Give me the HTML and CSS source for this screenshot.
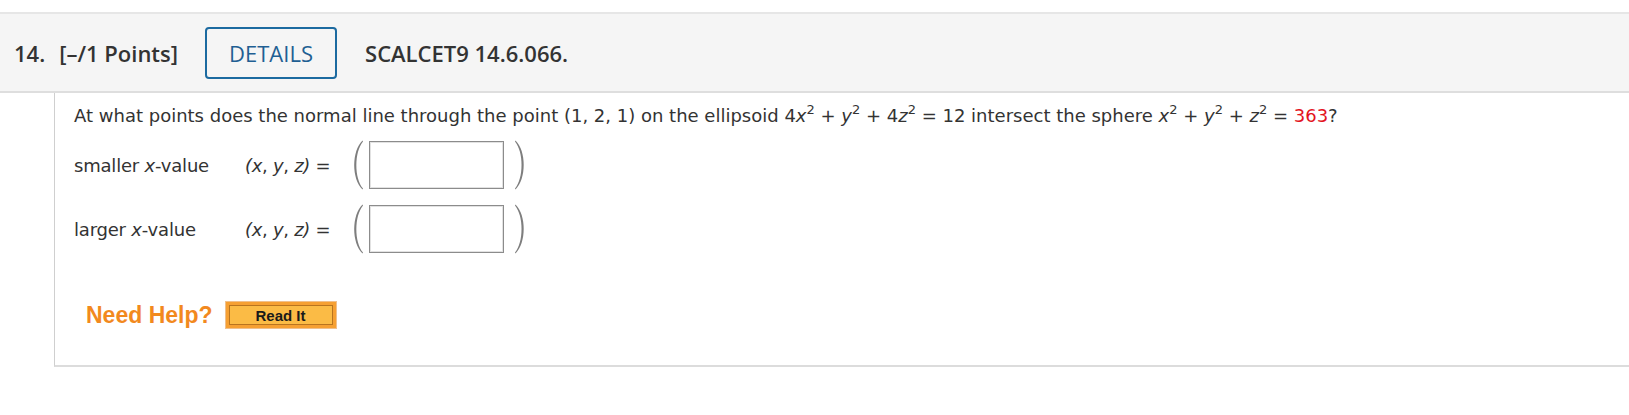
FILE: index.html
```html
<!DOCTYPE html>
<html lang="en">
<head>
<meta charset="utf-8">
<title>Question 14</title>
<link rel="stylesheet" href="styles.css">
</head>
<body>
<div class="question">
  <div class="q-head">
    <span class="q-num">14.</span>
    <span class="q-pts">[–/1 Points]</span>
    <button class="details-btn" type="button">DETAILS</button>
    <span class="q-code">SCALCET9 14.6.066.</span>
  </div>
  <div class="q-body">
    <p class="prompt">At what points does the normal line through the point (1, 2, 1) on the ellipsoid 4<i>x</i><sup>2</sup> + <i>y</i><sup>2</sup> + 4<i>z</i><sup>2</sup> = 12 intersect the sphere <i>x</i><sup>2</sup> + <i>y</i><sup>2</sup> + <i>z</i><sup>2</sup> = <span class="red">363</span>?</p>
    <div class="ans-row">
      <span class="ans-label">smaller <i>x</i>-value</span>
      <span class="ans-eq"><i>(x</i>, <i>y</i>, <i>z)</i> =</span>
      <svg class="paren" width="14" height="52" viewBox="0 0 14 52"><path d="M12.5 1.5 C1.5 12 1.5 40 12.5 50.5 L13 49.6 C4.2 39 4.2 13 13 2.4 Z" fill="#7e7e7e"/></svg>
      <span class="ans-box"></span>
      <svg class="paren paren-r" width="14" height="52" viewBox="0 0 14 52"><path d="M1.5 1.5 C12.5 12 12.5 40 1.5 50.5 L1 49.6 C9.8 39 9.8 13 1 2.4 Z" fill="#7e7e7e"/></svg>
    </div>
    <div class="ans-row">
      <span class="ans-label">larger <i>x</i>-value</span>
      <span class="ans-eq"><i>(x</i>, <i>y</i>, <i>z)</i> =</span>
      <svg class="paren" width="14" height="52" viewBox="0 0 14 52"><path d="M12.5 1.5 C1.5 12 1.5 40 12.5 50.5 L13 49.6 C4.2 39 4.2 13 13 2.4 Z" fill="#7e7e7e"/></svg>
      <span class="ans-box"></span>
      <svg class="paren paren-r" width="14" height="52" viewBox="0 0 14 52"><path d="M1.5 1.5 C12.5 12 12.5 40 1.5 50.5 L1 49.6 C9.8 39 9.8 13 1 2.4 Z" fill="#7e7e7e"/></svg>
    </div>
    <div class="help">
      <span class="help-text">Need Help?</span>
      <button class="read-btn" type="button"><span class="read-inner">Read It</span></button>
    </div>
  </div>
</div>
</body>
</html>
```
FILE: styles.css
```css
html, body {
  margin: 0;
  padding: 0;
  background: #ffffff;
}

.question {
  margin-top: 12px;
}

.q-head {
  display: flex;
  align-items: center;
  height: 77px;
  padding-left: 14px;
  background: #f5f5f5;
  border-top: 2px solid #e6e6e6;
  border-bottom: 2px solid #dedede;
  font-family: "Open Sans", "Noto Sans", sans-serif;
  font-size: 22px;
  color: #333333;
}

.q-num {
  font-weight: 600;
}

.q-pts {
  font-weight: 600;
  margin-left: 14px;
}

.details-btn {
  margin-left: 27px;
  width: 132px;
  height: 52px;
  border: 2px solid #1c6aa0;
  border-radius: 4px;
  background: transparent;
  font-family: "Open Sans", "Noto Sans", sans-serif;
  font-size: 22px;
  color: #1f5f93;
  padding: 0;
}

.q-code {
  font-weight: 600;
  margin-left: 28px;
}

.q-body {
  margin-left: 54px;
  border-left: 1px solid #cfcfcf;
  border-bottom: 2px solid #dcdcdc;
  padding: 10px 0 36px 19px;
  font-family: "DejaVu Sans", Verdana, sans-serif;
  font-size: 18px;
  color: #333333;
}

.prompt {
  margin: 0;
  line-height: 26px;
}

sup {
  font-size: 13px;
  line-height: 0;
  vertical-align: 8px;
}

.red {
  color: #e3141e;
}

.ans-row {
  display: flex;
  align-items: center;
  height: 52px;
  margin-top: 10px;
}

.ans-row + .ans-row {
  margin-top: 12px;
}

.ans-label {
  width: 171px;
  flex: none;
  letter-spacing: -0.2px;
}

.ans-eq {
  flex: none;
  width: 105px;
  letter-spacing: -0.3px;
}

.paren {
  flex: none;
  display: block;
}

.ans-box {
  flex: none;
  width: 133px;
  height: 46px;
  margin-left: 5px;
  border: 1px solid #8c8c8c;
  box-shadow: inset 0 0 0 1px #e2e2e2;
  background: #ffffff;
}

.paren-r {
  margin-left: 10px;
}

.help {
  display: flex;
  align-items: center;
  margin-top: 46px;
  margin-left: 12px;
}

.help-text {
  font-family: "Liberation Sans", Arial, sans-serif;
  font-weight: bold;
  font-size: 23px;
  color: #f2891e;
}

.read-btn {
  margin-left: 12px;
  width: 112px;
  height: 28px;
  padding: 3px;
  border: 1px solid #f0c08c;
  background: #f6a032;
  display: flex;
}

.read-inner {
  flex: 1;
  display: flex;
  align-items: center;
  justify-content: center;
  border: 1px solid #b8741f;
  background: #fbbb45;
  font-family: "Liberation Sans", Arial, sans-serif;
  font-weight: bold;
  font-size: 15px;
  color: #1a1a1a;
}
```
